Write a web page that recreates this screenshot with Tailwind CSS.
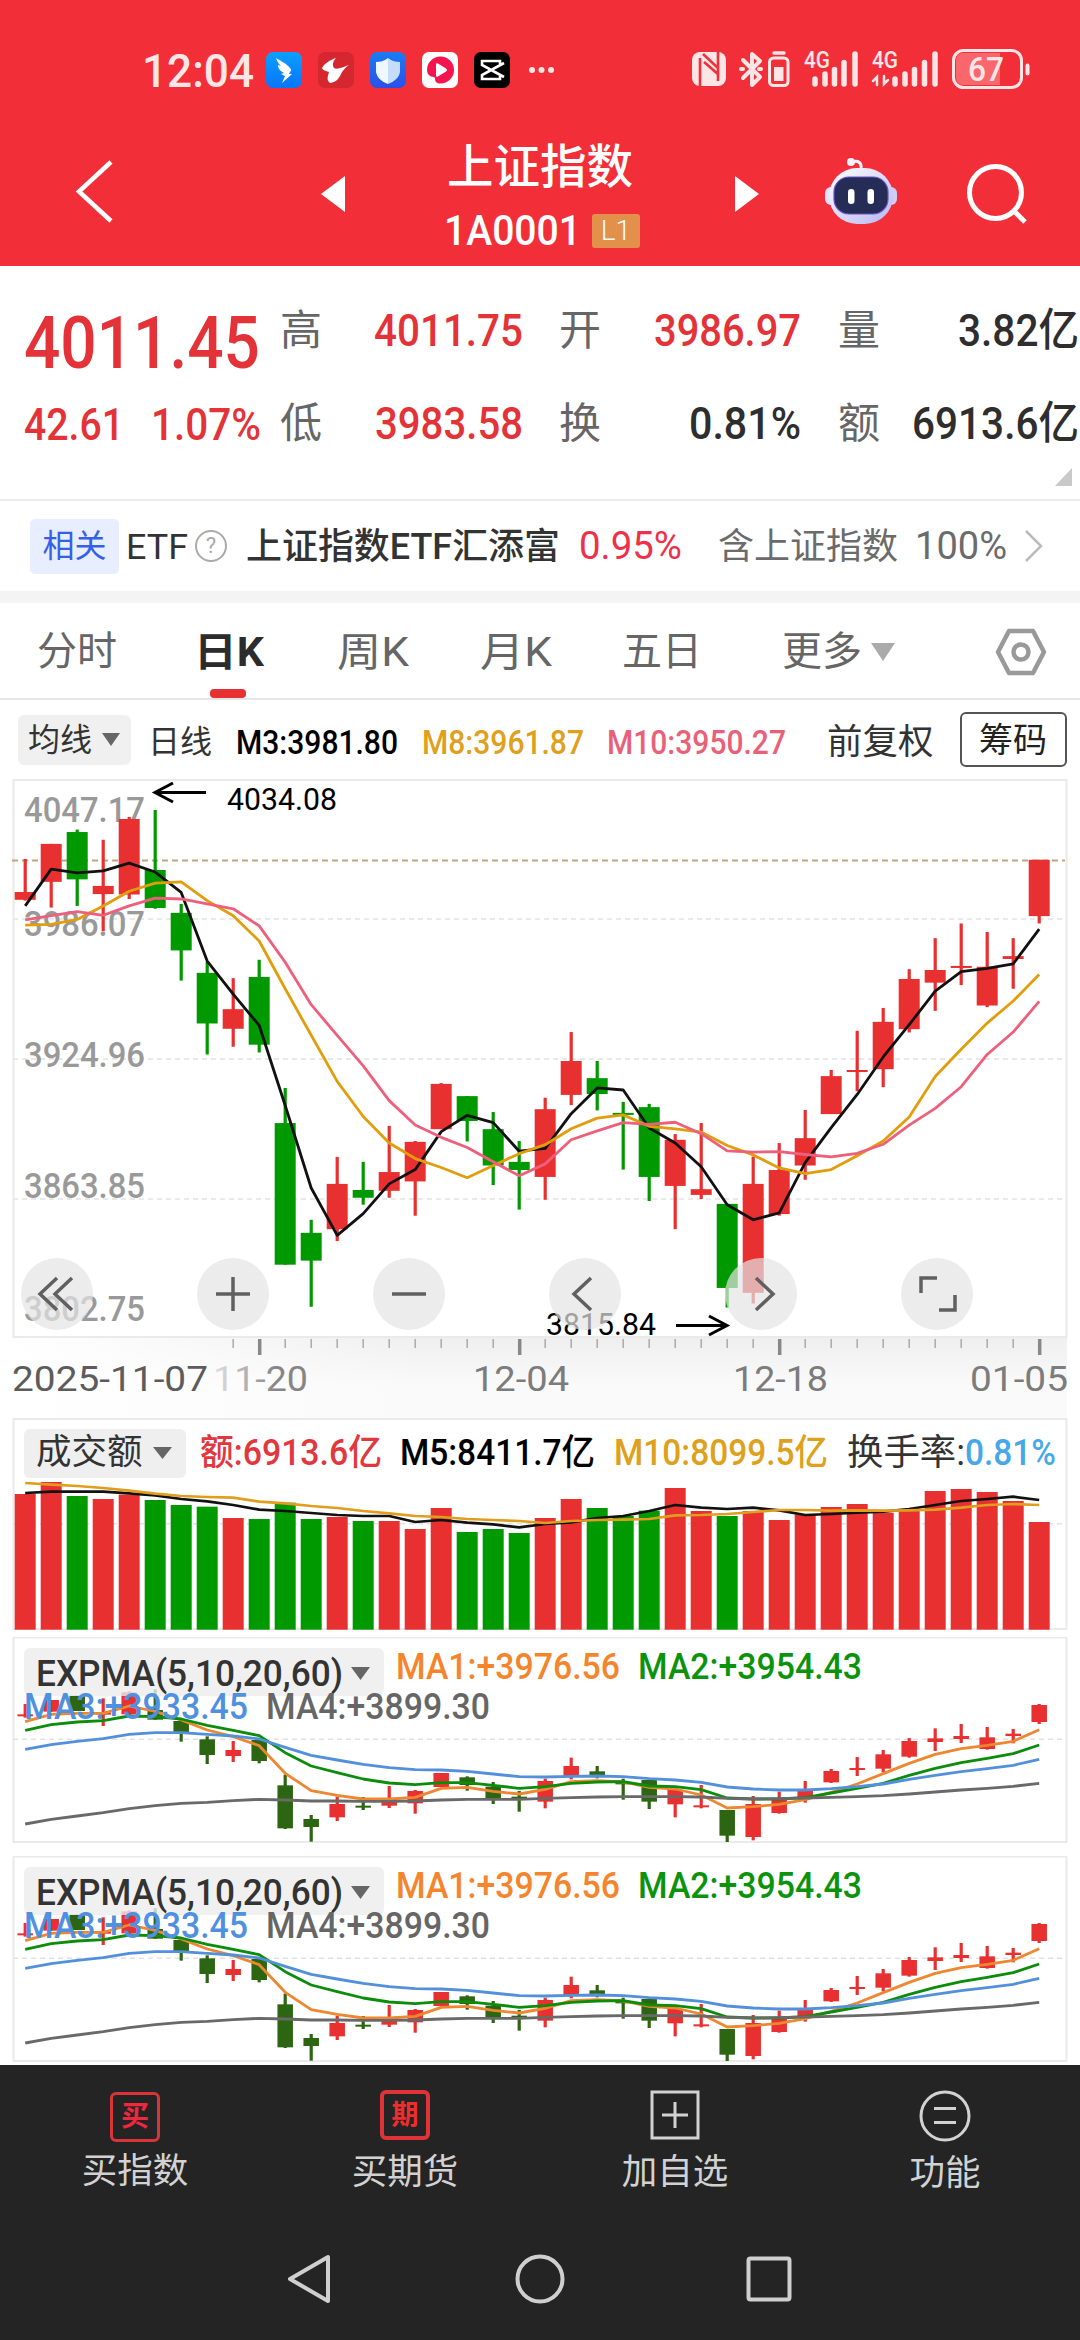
<!DOCTYPE html>
<html lang="zh-CN">
<head>
<meta charset="utf-8">
<title>上证指数 1A0001</title>
<script src="https://cdn.jsdelivr.net/npm/@tailwindcss/browser@4"></script>
</head>
<body class="w-[1080px] h-[2340px] overflow-hidden bg-white font-['Roboto','Noto_Sans_CJK_SC',sans-serif] leading-none text-[#333] whitespace-nowrap">

<!-- Header -->
<header class="h-[266px] bg-[#f22f38] text-white">
  <div class="flex h-[140px] items-center">
    <span data-w="112" class="ml-[142px] text-[47px] font-medium text-[#ffe6e6]">12:04</span>
    <div class="ml-[12px] flex gap-[16px]">
      <svg width="36" height="36" viewBox="0 0 36 36"><defs><linearGradient id="a1" x2="0" y2="1"><stop stop-color="#0aa0ff"/><stop offset="1" stop-color="#0a74ff"/></linearGradient></defs><rect width="36" height="36" rx="7" fill="url(#a1)"/><path d="M10 6c5 3 11 6 14 10c2 2 1 3 0 4l-1 2h3l-10 9l3-7l-4-2l3-1c-5-3-6-5-6-8l3 1c-3-3-4-5-5-8z" fill="#fff"/></svg>
      <svg width="36" height="36" viewBox="0 0 36 36"><rect width="36" height="36" rx="7" fill="#d42730"/><path d="M18 6C12 8 7 11 4 16c1 3 5 3 7 4c-1 4-3 8 1 11c7-1 9-5 11-9c2-4 4-6 8-9c-6 2-12 5-15 3c-2-3-1-7 2-10z" fill="#fff"/></svg>
      <svg width="36" height="36" viewBox="0 0 36 36"><defs><linearGradient id="a2" x2="0" y2="1"><stop stop-color="#1b7cf2"/><stop offset="1" stop-color="#2a50ea"/></linearGradient></defs><rect width="36" height="36" rx="7" fill="url(#a2)"/><path d="M18 6c4 3 8 4 12 4v9c0 6-6 11-12 13z" fill="#c5dcfb"/><path d="M18 6c-4 3-8 4-12 4v9c0 6 6 11 12 13z" fill="#f0f7ff"/></svg>
      <svg width="36" height="36" viewBox="0 0 36 36"><rect width="36" height="36" rx="7" fill="#fff"/><path d="M5 18a13.500 13.500 0 1 1 13.500 13.500c-4 0-5.500-2-5.500-5c0-2-2-1-4-2c-3-1.500-4-4-4-6.500z" fill="#f6144f"/><path d="M14 12.500q0-2 2-1l8 5q2 1.500 0 3l-8 5q-2 1-2-1z" fill="#fff"/></svg>
      <svg width="36" height="36" viewBox="0 0 36 36"><rect width="36" height="36" rx="7" fill="#000"/><path d="M30 11L8 23v4h18v-3M30 25L8 13V9h18v3" fill="none" stroke="#fff" stroke-width="2.600"/></svg>
    </div>
    <svg class="ml-[18px]" width="28" height="8" fill="#ffe6e6"><circle cx="4" cy="4" r="3"/><circle cx="13.500" cy="4" r="3"/><circle cx="23" cy="4" r="3"/></svg>
    <svg class="ml-[132px]" width="345" height="60" viewBox="688 40 345 60" fill="none" stroke="#ffe6e6" stroke-linecap="round">
      <rect x="692" y="52" width="34" height="34" rx="8" fill="#ffe6e6" stroke="none"/>
      <path d="M700 86V58M703 54l15 14V81M718 52V78M704 62l15 13" stroke="#f22f38" stroke-width="2.600" stroke-linecap="butt"/>
      <path d="M743 60l17 17l-8 8V54l8 7l-17 17" stroke-width="4" stroke-linejoin="round"/><path d="M741 69h2M759 69h2" stroke-width="4"/>
      <rect x="769.500" y="58" width="18.500" height="27.500" rx="4" stroke-width="3"/><path d="M774 53h10" stroke-width="3.500"/><rect x="774" y="67" width="9.500" height="14" fill="#ffe6e6" stroke="none"/>
      <g stroke-width="5.500"><path d="M815 79v5M825 74v10M834.500 69.500v14.500M844 62.500v21.500M855 54v30"/><path d="M895 79v5M905 74v10M914.500 69.500v14.500M924.500 62.500v21.500M935 54v30"/></g>
      <path d="M877 85V77l-4 4M884 76v8l4-4" stroke-width="2.500"/>
      <rect x="953.500" y="50.500" width="68" height="37" rx="10" stroke-width="3"/><path d="M963 53h37v32h-37q-7 0-7-8V61q0-8 7-8z" fill="#f9666c" stroke="none"/><path d="M1027.500 65.500v8" stroke-width="4"/>
      <g fill="#ffe6e6" stroke="none" font-weight="500"><text x="804" y="68" font-size="23" textLength="26" lengthAdjust="spacingAndGlyphs">4G</text><text x="872" y="68" font-size="23" textLength="26" lengthAdjust="spacingAndGlyphs">4G</text><text x="968" y="81" font-size="34" textLength="36" lengthAdjust="spacingAndGlyphs">67</text></g>
    </svg>
  </div>
  <div class="flex items-start">
    <svg class="ml-[74px] mt-[20px]" width="42" height="64" fill="none" stroke="#fff" stroke-width="4.500"><path d="M37 2L5 31.500L37 61"/></svg>
    <svg class="ml-[205px] mt-[36px]" width="24" height="36"><path d="M0 18L24 0V36z" fill="#fff"/></svg>
    <div class="ml-[95px] w-[200px]">
      <div class="ml-[7px] mt-[4px] text-[46.500px] font-medium">上证指数</div>
      <div class="mt-[19px] flex items-center"><span data-w="137" class="ml-[4px] text-[42px] font-medium">1A0001</span><span class="ml-[11px] flex h-[34px] w-[48px] items-center justify-center rounded-[3px] bg-[#e2904a] text-[28px] font-light">L1</span></div>
    </div>
    <svg class="ml-[95px] mt-[36px]" width="24" height="36"><path d="M24 18L0 0V36z" fill="#fff"/></svg>
    <svg class="ml-[63px] mt-[16px]" width="76" height="70" viewBox="822 156 76 70"><defs><linearGradient id="rb" x1="0" y1="0" x2="1" y2="1"><stop stop-color="#fff"/><stop offset="1" stop-color="#b9b6f2"/></linearGradient></defs>
      <circle cx="851" cy="162" r="4" fill="#f4f2ff"/><path d="M852 162c6-2 10 0 9 8" fill="none" stroke="#f4f2ff" stroke-width="3"/>
      <rect x="825" y="187" width="14" height="18" rx="6" fill="#e2e0fb"/><rect x="883" y="187" width="14" height="18" rx="6" fill="#cfcdf8"/>
      <rect x="829" y="168" width="64" height="56" rx="28" fill="url(#rb)"/><rect x="834" y="177" width="54" height="37" rx="15" fill="#252c55" stroke="#6554c8" stroke-width="1.200"/><rect x="848" y="189" width="6.500" height="15" rx="3.200" fill="#fff"/><rect x="867.500" y="189" width="6.500" height="15" rx="3.200" fill="#fff"/></svg>
    <svg class="ml-[67px] mt-[22px]" width="64" height="64" fill="none" stroke="#fff" stroke-width="5"><circle cx="30.500" cy="30.500" r="26"/><path d="M49 49l11 11"/></svg>
  </div>
</header>

<!-- Quote figures -->
<section class="relative flex h-[235px] border-b-2 border-[#ececec] text-[#e43338]">
  <div class="w-[260px]">
    <div class="ml-[24px] mt-[41px] flex"><span data-w="236" class="text-[72px] font-medium">4011.45</span></div>
    <div class="ml-[24px] mt-[24px] flex text-[44px] font-medium"><span data-w="100">42.61</span><span data-w="110" class="ml-[27px]">1.07%</span></div>
  </div>
  <div class="ml-[20px] mt-[18px] grid h-[186px] w-[800px] grid-cols-[42px_201px_80px_198px_80px_198px] items-center text-[45px] font-medium">
    <span class="text-[42px] font-normal text-[#666]">高</span><span class="flex justify-end"><span data-w="149">4011.75</span></span>
    <span class="pl-[36px] text-[42px] font-normal text-[#666]">开</span><span class="flex justify-end"><span data-w="147">3986.97</span></span>
    <span class="pl-[37px] text-[42px] font-normal text-[#666]">量</span><span class="flex justify-end text-[#2e2e2e]"><span data-w="121">3.82亿</span></span>
    <span class="text-[42px] font-normal text-[#666]">低</span><span class="flex justify-end"><span data-w="148">3983.58</span></span>
    <span class="pl-[36px] text-[42px] font-normal text-[#666]">换</span><span class="flex justify-end text-[#2e2e2e]"><span data-w="112">0.81%</span></span>
    <span class="pl-[37px] text-[42px] font-normal text-[#666]">额</span><span class="flex justify-end text-[#2e2e2e]"><span data-w="167">6913.6亿</span></span>
  </div>
  <svg class="absolute right-[8px] bottom-[13px]" width="17" height="18"><path d="M17 0V18H0z" fill="#c9c9c9"/></svg>
</section>

<!-- Related ETF -->
<section class="flex h-[102px] items-center border-b-12 border-[#f4f4f4] text-[36px]">
  <span class="ml-[30px] flex h-[55px] w-[89px] shrink-0 items-center justify-center rounded-[5px] bg-[#e8edff] text-[32px] text-[#3560e8]">相关</span>
  <span data-w="62" class="ml-[7px] mt-[2px] text-[35px]">ETF</span>
  <span class="ml-[7px] flex size-[32px] shrink-0 items-center justify-center rounded-full border-2 border-[#aaa] text-[22px] text-[#aaa]">?</span>
  <span data-w="314" class="ml-[19px] mt-[2px] font-medium">上证指数ETF汇添富</span>
  <span data-w="103" class="ml-[19px] text-[38px] text-[#ee3049]">0.95%</span>
  <span data-w="180" class="ml-[36px] mt-[2px] text-[#6b6b6b]">含上证指数</span>
  <span data-w="92" class="ml-[17px] text-[38px] text-[#6b6b6b]">100%</span>
  <svg class="ml-[17px]" width="20" height="34" fill="none" stroke="#bbb" stroke-width="2.500"><path d="M2 2L17 17L2 32"/></svg>
</section>

<!-- Period tabs -->
<nav class="relative flex h-[97px] items-center border-b-2 border-[#e6e6e6] pt-[2px] text-[40px] text-[#666]">
  <span class="ml-[37px]">分时</span><span data-w="70" class="ml-[77px] font-bold text-[#2c2c2c]">日K</span><span data-w="72" class="ml-[73px]">周K</span><span data-w="72" class="ml-[71px]">月K</span><span class="ml-[70px]">五日</span><span class="ml-[80px]">更多</span>
  <svg class="ml-[9px]" width="24" height="18"><path d="M0 0H24L12 18z" fill="#aaa"/></svg>
  <svg class="ml-[100px]" width="52" height="50" fill="none" stroke="#999" stroke-width="4.500" stroke-linejoin="round"><path d="M14 4H38L49 25L38 46H14L3 25z"/><circle cx="26" cy="25" r="7.500"/></svg>
  <i class="absolute bottom-0 left-[210px] h-[9px] w-[36px] rounded-[4px] bg-[#e63031]"></i>
</nav>

<!-- Moving averages -->
<div class="flex h-[79px] items-center text-[33px] text-[#333]">
  <span class="ml-[18px] flex h-[50px] w-[113px] shrink-0 items-center rounded-[6px] bg-[#f0f0f0] pl-[10px]"><span class="text-[32px]">均线</span><svg class="ml-[10px]" width="18" height="13"><path d="M0 0H18L9 13z" fill="#666"/></svg></span>
  <span class="ml-[17px] mt-[5px] text-[32px]">日线</span>
  <span data-w="162" class="ml-[24px] mt-[6px] font-medium text-black">M3:3981.80</span>
  <span data-w="162" class="ml-[24px] mt-[6px] font-medium text-[#dfa01c]">M8:3961.87</span>
  <span data-w="179" class="ml-[23px] mt-[6px] font-medium text-[#ea6079]">M10:3950.27</span>
  <span class="ml-[41px] mt-[7px] text-[35.500px]">前复权</span>
  <span class="ml-[26px] flex h-[55px] w-[107px] shrink-0 items-center justify-center rounded-[6px] border-2 border-[#555] text-[34px] text-[#222]">筹码</span>
</div>

<!-- Candlestick chart -->
<div class="relative h-[639px]">
  <svg id="main" class="block" width="1080" height="639" viewBox="0 779 1080 639"></svg>
  <div class="absolute top-[479px] left-[21px] flex gap-[104px]">
    <svg class="rounded-full bg-[#e4e4e4]/70" width="72" height="72" fill="none" stroke="#606060" stroke-width="3.500"><path d="M36 20L19 36L36 52M51 20L34 36L51 52"/></svg>
    <svg class="rounded-full bg-[#e4e4e4]/70" width="72" height="72" fill="none" stroke="#606060" stroke-width="3.500"><path d="M19 36H53M36 19V53"/></svg>
    <svg class="rounded-full bg-[#e4e4e4]/70" width="72" height="72" fill="none" stroke="#606060" stroke-width="3.500"><path d="M19 36H53"/></svg>
    <svg class="rounded-full bg-[#e4e4e4]/70" width="72" height="72" fill="none" stroke="#606060" stroke-width="3.500"><path d="M42 20L25 36L42 52"/></svg>
    <svg class="rounded-full bg-[#e4e4e4]/70" width="72" height="72" fill="none" stroke="#606060" stroke-width="3.500"><path d="M31 20L48 36L31 52"/></svg>
    <svg class="rounded-full bg-[#e4e4e4]/70" width="72" height="72" fill="none" stroke="#606060" stroke-width="3.500"><path d="M20 35V20H36M54 37V52H38"/></svg>
  </div>
</div>

<!-- Turnover -->
<div class="relative h-[219px]">
  <svg id="vol" class="absolute inset-0" width="1080" height="219" viewBox="0 1418 1080 219"></svg>
  <div class="relative flex h-[70px] items-center text-[36px] font-medium">
    <span class="ml-[24px] flex h-[49px] w-[162px] shrink-0 items-center rounded-[6px] bg-[#efefef] pl-[12px]"><span class="text-[35.500px] font-normal">成交额</span><svg class="ml-[10px]" width="19" height="12"><path d="M0 0H19L9.500 12z" fill="#666"/></svg></span>
    <span data-w="182" class="ml-[14px] text-[#e2373c]">额:6913.6亿</span>
    <span data-w="195" class="ml-[18px] text-black">M5:8411.7亿</span>
    <span data-w="214" class="ml-[19px] text-[#dfa01c]">M10:8099.5亿</span>
    <span data-w="118" class="ml-[19px] font-normal">换手率:</span><span data-w="91" class="text-[#46a8e8]">0.81%</span>
  </div>
</div>

<!-- Indicator panels -->
<div class="relative h-[219px]">
  <svg id="exp1" class="absolute inset-0" width="1080" height="219" viewBox="0 1637 1080 219"></svg>
  <div class="relative flex pt-[11px] text-[36px] font-medium">
    <span class="ml-[24px] flex h-[48px] w-[360px] shrink-0 items-center rounded-[6px] bg-[#ececec]/80 pt-[3px] pl-[12px]"><span data-w="307">EXPMA(5,10,20,60)</span><svg class="ml-[8px]" width="19" height="13"><path d="M0 0H19L9.500 13z" fill="#666"/></svg></span>
    <span data-w="224" class="ml-[12px] mt-[1px] text-[#f5852c]">MA1:+3976.56</span>
    <span data-w="224" class="ml-[18px] mt-[1px] text-[#0b930b]">MA2:+3954.43</span>
  </div>
  <div class="relative -mt-[7px] flex text-[36px] font-medium"><span data-w="224" class="ml-[24px] text-[#4f91e0]">MA3:+3933.45</span><span data-w="224" class="ml-[18px] text-[#666]">MA4:+3899.30</span></div>
</div>
<div class="relative h-[209px]">
  <svg id="exp2" class="absolute inset-0" width="1080" height="209" viewBox="0 1637 1080 209"></svg>
  <div class="relative flex pt-[11px] text-[36px] font-medium">
    <span class="ml-[24px] flex h-[48px] w-[360px] shrink-0 items-center rounded-[6px] bg-[#ececec]/80 pt-[3px] pl-[12px]"><span data-w="307">EXPMA(5,10,20,60)</span><svg class="ml-[8px]" width="19" height="13"><path d="M0 0H19L9.500 13z" fill="#666"/></svg></span>
    <span data-w="224" class="ml-[12px] mt-[1px] text-[#f5852c]">MA1:+3976.56</span>
    <span data-w="224" class="ml-[18px] mt-[1px] text-[#0b930b]">MA2:+3954.43</span>
  </div>
  <div class="relative -mt-[7px] flex text-[36px] font-medium"><span data-w="224" class="ml-[24px] text-[#4f91e0]">MA3:+3933.45</span><span data-w="224" class="ml-[18px] text-[#666]">MA4:+3899.30</span></div>
</div>

<!-- Bottom actions and system keys -->
<footer class="h-[275px] bg-[#242424] text-[#d2d2d2]">
  <div class="grid h-[149px] grid-cols-4 justify-items-center pt-[25px] text-[35.500px]">
    <div class="flex flex-col items-center gap-[12px]"><span class="mt-[2px] flex size-[50px] items-center justify-center rounded-[6px] border-3 border-[#d8343a] text-[28px] font-bold text-[#f0283f]">买</span><span>买指数</span></div>
    <div class="flex flex-col items-center gap-[15px]"><span class="flex size-[50px] items-center justify-center rounded-[6px] border-4 border-[#e03338] text-[27px] font-bold text-[#f02c2c]">期</span><span>买期货</span></div>
    <div class="flex flex-col items-center gap-[15px]"><svg width="50" height="50" fill="none" stroke="#d2d2d2" stroke-width="3"><rect x="2" y="2" width="46" height="46"/><path d="M12 25H38M25 12V38"/></svg><span>加自选</span></div>
    <div class="flex flex-col items-center gap-[14px]"><svg width="52" height="52" fill="none" stroke="#d2d2d2" stroke-width="3"><circle cx="26" cy="26" r="24"/><path d="M15 18.500H37M15 32.500H37"/></svg><span>功能</span></div>
  </div>
  <div class="flex h-[130px] items-center">
    <svg class="ml-[285px]" width="48" height="52" fill="none" stroke="#cfcfcf" stroke-width="4" stroke-linejoin="round"><path d="M43 4V48L5 26z"/></svg>
    <svg class="ml-[181px]" width="52" height="52" fill="none" stroke="#cfcfcf" stroke-width="4"><circle cx="26" cy="26" r="22.500"/></svg>
    <svg class="ml-[180px]" width="46" height="46" fill="none" stroke="#cfcfcf" stroke-width="4"><rect x="2.500" y="2.500" width="41" height="41" rx="2"/></svg>
  </div>
</footer>

<script>
// Condense or widen labels to their column widths
document.querySelectorAll('[data-w]').forEach(function (e) {
  var w = e.dataset.w;
  e.style.flexShrink = 0;
  e.innerHTML = '<svg width="' + w + '" style="height:1em;overflow:visible"><text x="0" y="0.841em" textLength="' + w + '" lengthAdjust="spacingAndGlyphs" fill="currentColor">' + e.textContent + '</text></svg>';
});

var X = function (i) { return 25.2 + 26 * i; };
var N = function (s) { return s.split(' ').map(Number); };
function line(s, f, c, w) {
  return '<polyline fill="none" stroke="' + c + '" stroke-width="' + (w || 2.800) + '" stroke-linejoin="round" points="' +
    N(s).map(function (v, i) { return X(i) + ',' + f(v); }).join(' ') + '"/>';
}
function candles(s, f, bw, red, green) {
  return s.split('|').map(function (r, i) {
    var c = r[0] == 'R' ? red : green, v = N(r.slice(1)).map(f), x = X(i);
    return '<rect x="' + (x - 1.600) + '" y="' + v[0] + '" width="3.200" height="' + (v[3] - v[0]) + '" fill="' + c + '"/>' +
      '<rect x="' + (x - bw / 2) + '" y="' + v[1] + '" width="' + bw + '" height="' + Math.max(v[2] - v[1], 2) + '" fill="' + c + '"/>';
  }).join('');
}
function dash(y, c, d) { return '<path d="M13 ' + y + 'H1065" stroke="' + (c || '#e2e2e2') + '" stroke-width="1.500" stroke-dasharray="' + (d || '5 4') + '"/>'; }
function box(y1, y2) { return '<rect x="13.500" y="' + y1 + '" width="1053" height="' + (y2 - y1) + '" fill="none" stroke="#eaeaea" stroke-width="2"/>'; }
function txt(s, x, y, w, c, fs, wt) { return '<text x="' + x + '" y="' + y + '" textLength="' + w + '" lengthAdjust="spacingAndGlyphs" font-size="' + fs + '" font-weight="' + (wt || 400) + '" fill="' + c + '">' + s + '</text>'; }

// Daily candles: high, body top, body bottom, low
var f = function (v) { return 770 + v / 2.45; };
var s = '<defs><linearGradient id="gy" x2="0" y2="1"><stop stop-color="#efefef"/><stop offset=".6" stop-color="#fafafa"/><stop offset="1" stop-color="#fafafa"/></linearGradient><linearGradient id="gx"><stop stop-color="#fff"/><stop offset="1" stop-color="#fff" stop-opacity="0"/></linearGradient><linearGradient id="gt" gradientUnits="userSpaceOnUse" x1="212" x2="275" y1="0" y2="0"><stop stop-color="#e4e4e4"/><stop offset="1" stop-color="#868686"/></linearGradient></defs>' +
  '<rect x="13" y="1338" width="1054" height="80" fill="url(#gy)"/><rect x="12" y="1338" width="420" height="80" fill="url(#gx)"/>' + box(780, 1337);
s += dash(f(365)) + dash(f(708)) + dash(f(1051));
[['4047.17', 822], ['3986.07', 936], ['3924.96', 1067], ['3863.85', 1198], ['3802.75', 1321]].forEach(function (p) { s += txt(p[0], 24, p[1], 121, '#999', 34.500, 500); });
s += '<path d="M12 ' + f(222) + 'H1065" stroke="#c0a67e" stroke-width="2" stroke-dasharray="6 4"/>';
s += candles('R218 299 318 320|R181 181 274 337|G146 152 268 333|R171 284 304 395|R115 120 305 316|G98 245 338 340|G328 350 442 516|G470 497 621 697|R510 586 634 678|G465 507 673 692|G779 865 1212 1212|G1102 1134 1202 1315|R948 1014 1125 1154|G960 1029 1048 1065|R872 985 1031 1048|R909 911 1008 1092|R767 769 880 880|G799 799 860 910|G838 880 969 1017|G909 960 980 1077|R803 831 997 1053|R642 713 796 821|G713 755 794 834|G813 840 845 979|G818 826 997 1056|R892 906 1019 1125|R865 1027 1041 1051|G1063 1063 1269 1317|R947 1014 1281 1307|R914 980 1088 1092|R833 902 969 1004|R735 750 843 843|R639 735 740 787|R583 617 733 777|R488 512 635 643|R412 490 521 590|R376 480 485 527|R397 482 577 581|R412 456 463 536|R220 220 358 376', f, 21, '#e83030', '#009900');
s += line('333 243 252 247 228 250 300 468 549 626 822 1024 1140 1087 1014 979 886 846 864 934 927 842 779 784 877 914 972 1065 1102 1085 962 876 795 703 624 542 494 486 475 390', f, '#111');
s += line('380 378 366 333 297 277 274 320 357 419 536 650 763 849 914 952 974 999 969 940 918 879 853 845 873 879 887 920 943 975 989 979 945 909 850 751 684 620 566 501', f, '#e29d0c');
s += line('367 357 347 356 333 314 316 328 340 382 471 575 650 725 810 870 900 925 960 994 965 906 884 864 868 863 891 933 936 935 942 948 939 917 870 829 776 697 642 567', f, '#ee5f7c');
s += '<g fill="none" stroke="#000" stroke-width="3"><path d="M206 792.500H155M173 783L155 792.500L173 802"/><path d="M676 1325.500H727M709 1316L727 1325.500L709 1335"/></g>';
s += txt('4034.08', 227, 810, 110, '#000', 31) + txt('3815.84', 546, 1335, 110, '#000', 31);
for (var i = 8; i < 40; i++) s += i % 10 == 9 ? '<path d="M' + (X(i) + .5) + ' 1339v16" stroke="#888" stroke-width="3.500"/>' : '<path d="M' + X(i) + ' 1339v9" stroke="#aaa" stroke-width="1.500"/>';
s += txt('2025-11-07', 12, 1391, 196, '#5c5c5c', 34.500) + txt('11-20', 213, 1391, 95, 'url(#gt)', 34.500) + txt('12-04', 473, 1391, 96, '#7c7c7c', 34.500) + txt('12-18', 733, 1391, 95, '#7c7c7c', 34.500) + txt('01-05', 970, 1391, 98, '#7c7c7c', 34.500);
document.getElementById('main').innerHTML = s;

// Turnover columns
var g = function (v) { return 1400 + v / 3; };
s = box(1419, 1629) + dash(g(371));
'R282 R246 G288 R297 R284 G300 G315 G320 R354 G357 G308 G357 R351 G363 R363 R387 R324 G396 G387 G399 R354 R297 G324 G348 G332 R264 R333 G348 R333 R360 R343 R321 R312 R338 R331 R273 R267 R276 R303 R366'.split(' ').forEach(function (r, i) {
  var y = g(+r.slice(1));
  s += '<rect x="' + (X(i) - 10.500) + '" y="' + y + '" width="21" height="' + (1629.700 - y) + '" fill="' + (r[0] == 'R' ? '#e83030' : '#009900') + '"/>';
});
s += line('279 275 275 275 280 286 297 304 315 329 333 339 345 348 348 366 360 368 373 382 372 367 354 348 333 315 323 327 323 331 345 342 338 335 327 315 303 297 290 300', g, '#111', 2.700);
s += line('249 254 258 264 272 281 288 291 293 305 310 318 324 333 340 348 351 357 360 363 369 363 360 359 357 346 345 342 336 330 330 332 331 332 331 329 323 315 312 315', g, '#e29d1c', 2.700);
document.getElementById('vol').innerHTML = s;

// EXPMA panels
s = box(1637.500, 1842) + dash(g(1018));
s += candles('R912 943 949 953|R900 900 935 935|G887 887 933 933|R895 938 944 978|R874 877 943 945|G868 930 959 959|G962 963 997 1025|G1009 1018 1065 1092|R1023 1050 1068 1086|G1015 1020 1083 1090|G1124 1156 1285 1287|G1245 1257 1281 1325|R1190 1212 1252 1263|G1191 1217 1223 1230|R1158 1200 1217 1224|R1170 1173 1210 1241|R1119 1119 1161 1161|G1129 1132 1155 1172|G1146 1160 1197 1212|G1173 1190 1195 1235|R1136 1143 1205 1225|R1073 1098 1128 1138|G1098 1114 1125 1135|G1136 1147 1150 1199|G1140 1140 1205 1227|R1170 1170 1213 1252|R1155 1216 1221 1225|G1230 1230 1307 1326|R1188 1212 1311 1321|R1175 1199 1239 1241|R1143 1170 1196 1208|R1107 1113 1147 1149|R1071 1104 1110 1128|R1050 1063 1106 1117|R1014 1023 1070 1073|R985 1015 1026 1053|R972 1008 1017 1029|R981 1012 1047 1049|R987 1001 1008 1030|R912 915 966 972', g, 15.500, '#e83030', '#2d6612');
s += line('965 943 940 940 918 934 960 990 1010 1037 1120 1172 1186 1197 1197 1192 1165 1162 1174 1182 1168 1145 1142 1146 1162 1167 1185 1224 1220 1213 1199 1177 1152 1121 1090 1063 1046 1036 1024 989', g, '#ee8730', 2.800);
s += line('991 974 966 962 948 950 957 976 991 1007 1058 1098 1118 1137 1149 1154 1148 1148 1156 1165 1160 1150 1146 1145 1158 1160 1169 1194 1197 1197 1193 1179 1165 1150 1126 1105 1088 1075 1061 1035', g, '#0b8c0b', 2.800);
s += line('1048 1034 1024 1016 1003 998 998 1003 1008 1017 1042 1066 1080 1093 1103 1109 1110 1114 1122 1130 1131 1129 1128 1130 1136 1140 1147 1161 1167 1170 1170 1166 1160 1152 1138 1126 1115 1106 1096 1078', g, '#5390dc', 2.800);
s += line('1272 1258 1248 1238 1226 1217 1210 1207 1202 1198 1200 1203 1203 1204 1204 1203 1200 1198 1198 1198 1195 1193 1191 1190 1190 1190 1191 1195 1197 1196 1194 1192 1190 1187 1182 1176 1170 1165 1159 1150', g, '#696969', 2.800);
document.getElementById('exp1').innerHTML = s;
document.getElementById('exp2').innerHTML = s;
</script>
</body>
</html>
